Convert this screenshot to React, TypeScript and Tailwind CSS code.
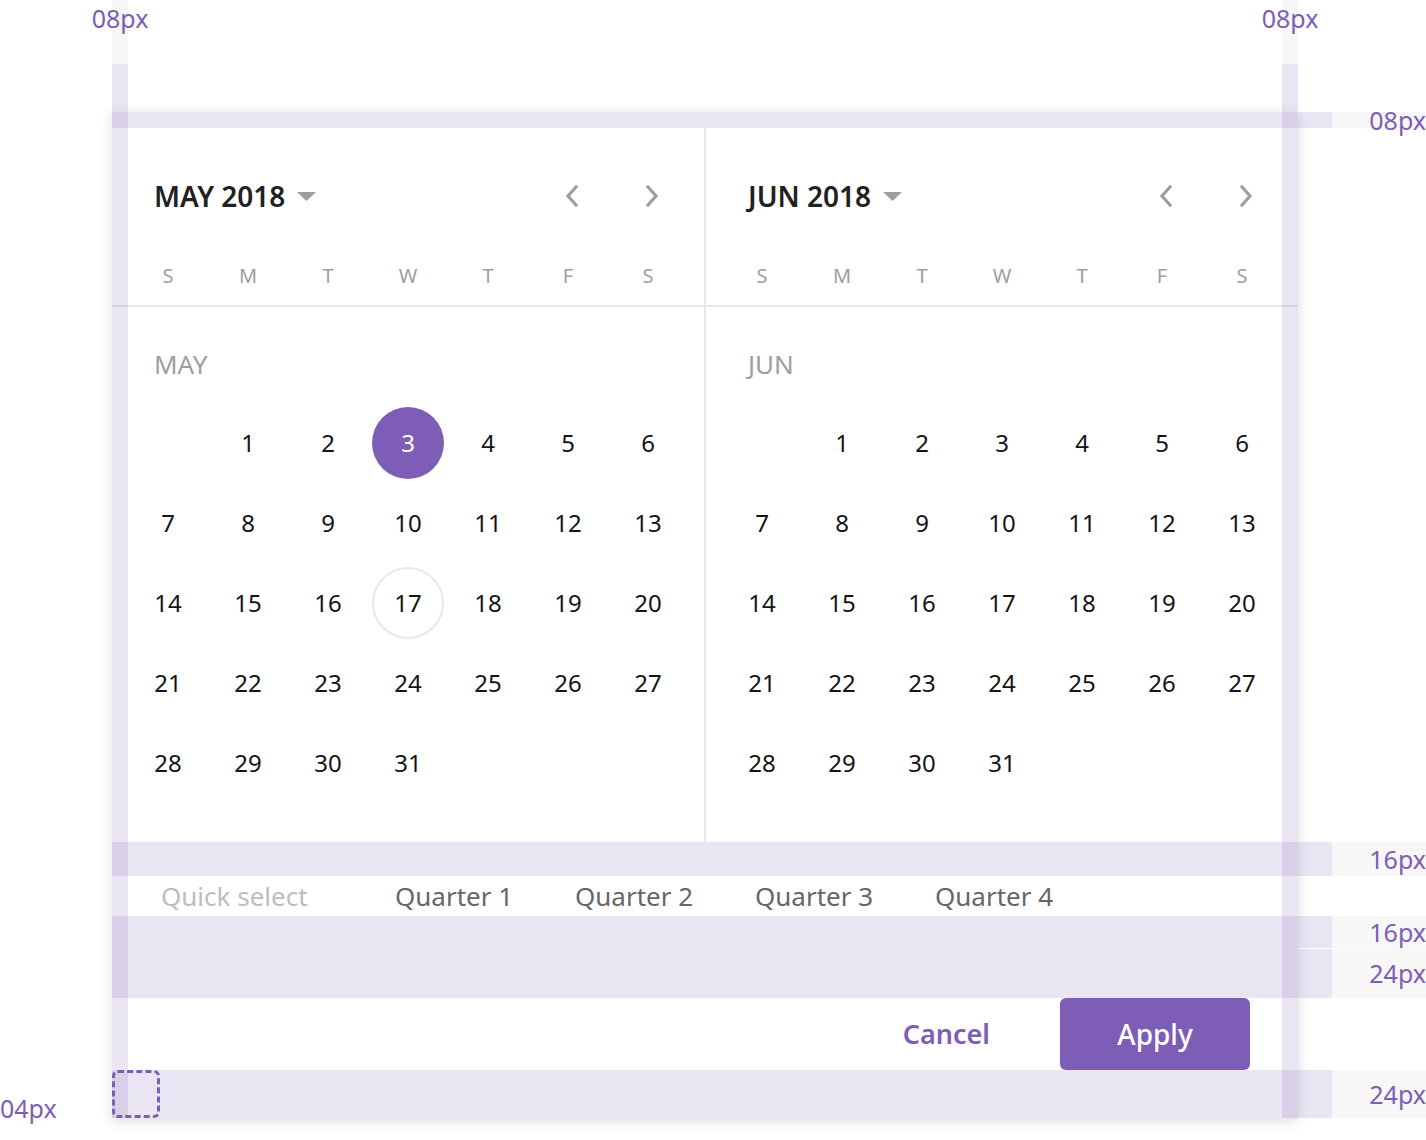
import React from 'react';

const BAND = 'bg-[#eae5f3]';
const WEEKDAYS = ['S', 'M', 'T', 'W', 'T', 'F', 'S'];
const QUARTERS = ['Quarter 1', 'Quarter 2', 'Quarter 3', 'Quarter 4'];

function Chevron({ dir }: { dir: 'left' | 'right' }) {
  return (
    <svg width="14" height="24" viewBox="0 0 14 24" fill="none" stroke="#9e9e9e" strokeWidth="3.2" strokeLinecap="square">
      {dir === 'left' ? <polyline points="11,3 3,12 11,21" /> : <polyline points="3,3 11,12 3,21" />}
    </svg>
  );
}

function DayCell({ day, selected, today }: { day: number | null; selected?: boolean; today?: boolean }) {
  if (day === null) return <div className="h-20 w-20" />;
  return (
    <div className="flex h-20 w-20 items-center justify-center">
      <div
        className={
          'flex h-[72px] w-[72px] items-center justify-center rounded-full text-[24px] ' +
          (selected
            ? 'bg-[#7e5db6] text-white'
            : today
              ? 'border-2 border-[#e8e8e8] text-[#141414]'
              : 'text-[#141414]')
        }
      >
        {day}
      </div>
    </div>
  );
}

function MonthPanel({ title, short, selectedDay, todayDay, divider }: {
  title: string;
  short: string;
  selectedDay?: number;
  todayDay?: number;
  divider?: boolean;
}) {
  const cells: (number | null)[] = [null, ...Array.from({ length: 31 }, (_, i) => i + 1)];

  return (
    <div className={'w-[592px] shrink-0 ' + (divider ? 'box-content border-r-2 border-[#e8e8e8]' : '')}>
      <div className={'h-4 ' + BAND} />
      <div className="border-b-2 border-[#e8e8e8] pt-12 pb-[9px]">
        <div className="flex h-10 items-center justify-between pl-[42px] pr-8">
          <div className="flex items-center gap-3">
            <span className="text-[28px] font-semibold leading-none text-[#212121]">{title}</span>
            <svg width="19" height="9" viewBox="0 0 19 9">
              <polygon points="0,0 19,0 9.5,9" fill="#9e9e9e" />
            </svg>
          </div>
          <div className="flex gap-10">
            <button className="flex h-10 w-10 items-center justify-center">
              <Chevron dir="left" />
            </button>
            <button className="flex h-10 w-10 items-center justify-center">
              <Chevron dir="right" />
            </button>
          </div>
        </div>
        <div className="mt-10 grid grid-cols-[repeat(7,80px)] pl-4">
          {WEEKDAYS.map((d, i) => (
            <div key={i} className="flex h-10 items-center justify-center text-[20px] text-[#9e9e9e]">
              {d}
            </div>
          ))}
        </div>
      </div>
      <div className="pt-[37px] pb-[39px]">
        <div className="flex h-10 items-center pl-[42px] text-[26px] text-[#9e9e9e]">{short}</div>
        <div className="mt-[19px] grid grid-cols-[repeat(7,80px)] pl-4">
          {cells.map((d, i) => (
            <DayCell key={i} day={d} selected={d === selectedDay} today={d === todayDay} />
          ))}
        </div>
      </div>
    </div>
  );
}

function SideLabel({ text, h }: { text: string; h: string }) {
  return (
    <div className={'flex ' + h}>
      <div className={'w-[34px] ' + BAND} />
      <div className="flex flex-1 items-center justify-end bg-[#f7f7f7]">
        <span className="text-[25px] leading-none text-[#7e5db6]">{text}</span>
      </div>
    </div>
  );
}

function TopStrip() {
  return (
    <div className="flex w-4 flex-col items-center">
      <div className="flex h-16 w-4 flex-col items-center bg-[#f7f7f7] pt-[3px]">
        <span className="whitespace-nowrap text-[25px] leading-[30px] text-[#7e5db6]">08px</span>
      </div>
      <div className={'h-12 w-4 ' + BAND} />
    </div>
  );
}

export default function App() {
  return (
    <div className="h-[1140px] w-[1426px] overflow-hidden bg-white font-['Noto_Sans',sans-serif]">
      <div className="flex h-[112px]">
        <div className="w-[112px]" />
        <TopStrip />
        <div className="w-[1154px]" />
        <TopStrip />
      </div>

      <div className="flex">
        <div className="flex w-[112px] flex-col justify-end">
          <span className="mb-[-5px] text-[25px] leading-[30px] text-[#7e5db6]">04px</span>
        </div>

        <div className="relative w-[1186px] bg-white shadow-[0_3px_12px_rgba(0,0,0,0.14)]">
          <div className="flex">
            <MonthPanel title="MAY 2018" short="MAY" selectedDay={3} todayDay={17} divider />
            <MonthPanel title="JUN 2018" short="JUN" />
          </div>

          <div className={'h-[34px] ' + BAND} />

          <div className="flex h-10 items-center pl-[49px] text-[26px] leading-none">
            <span className="w-[234px] text-[#bdbdbd]">Quick select</span>
            {QUARTERS.map((q) => (
              <span key={q} className="w-[180px] text-[#666666]">{q}</span>
            ))}
          </div>

          <div className={'h-8 ' + BAND} />
          <div className="h-px bg-[#eeebf5]" />
          <div className={'h-[49px] ' + BAND} />

          <div className="flex h-[72px] items-center justify-end pr-12">
            <button className="mr-[70px] text-[27px] font-semibold text-[#7e5db6]">Cancel</button>
            <button className="flex h-[72px] w-[190px] items-center justify-center rounded-md bg-[#7e5db6] text-[28px] font-medium text-white">
              Apply
            </button>
          </div>

          <div className={'h-12 ' + BAND}>
            <div className="relative z-10 h-12 w-12 rounded-md border-[3px] border-dashed border-[#7e5db6]" />
          </div>

          {/* spec overlays: side padding guides */}
          <div className="absolute inset-y-0 left-0 w-4 bg-[rgba(126,93,182,0.16)]" />
          <div className="absolute inset-y-0 right-0 w-4 bg-[rgba(126,93,182,0.16)]" />
        </div>

        <div className="flex w-[128px] flex-col">
          <SideLabel text="08px" h="h-4" />
          <div className="h-[714px]" />
          <SideLabel text="16px" h="h-[34px]" />
          <div className="h-10" />
          <SideLabel text="16px" h="h-8" />
          <div className="h-px" />
          <SideLabel text="24px" h="h-[49px]" />
          <div className="h-[72px]" />
          <SideLabel text="24px" h="h-12" />
        </div>
      </div>
    </div>
  );
}
